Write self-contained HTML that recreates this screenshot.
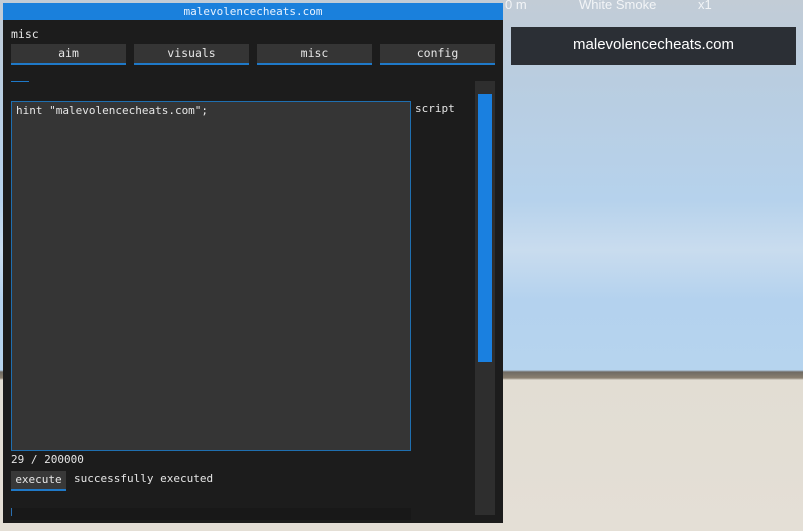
<!DOCTYPE html>
<html><head><meta charset="utf-8"><style>
*{margin:0;padding:0;box-sizing:border-box}
body{width:803px;height:531px;overflow:hidden;position:relative;font-family:"DejaVu Sans Mono","Liberation Mono",monospace;font-size:11px;color:#e6e6e6;
background:linear-gradient(180deg,#c2ccd6 0px,#b9cde0 80px,#b6d2ec 200px,#c9dcee 250px,#b4d2ee 300px,#b6d4ee 370px,#6f6a62 372px,#8a8070 378px,#e2ddd3 380px,#e4dfd6 531px)}
.a{position:absolute}
.win{left:3px;top:3px;width:500px;height:520px;background:#1c1c1c}
.title{left:3px;top:3px;width:500px;height:17px;background:#1a80dc;color:#e8f2ff;text-align:center;line-height:17px;font-size:11px}
.tab{top:44px;width:115px;height:21px;background:#353535;border-bottom:2px solid #1f79c8;text-align:center;line-height:18px;font-size:11.5px}
</style></head><body>
<div class="a" style="left:505px;top:0;width:298px;height:14px;color:#fff;font-family:'Liberation Sans',sans-serif;font-size:13px;opacity:.8"><span class="a" style="left:0;top:-3px">0 m</span><span class="a" style="left:74px;top:-3px">White Smoke</span><span class="a" style="left:193px;top:-3px">x1</span></div>
<div class="a" style="left:511px;top:27px;width:285px;height:38px;background:#2b2f35;color:#fff;font-family:'Liberation Sans',sans-serif;font-size:15px;text-align:center;line-height:36px">malevolencecheats.com</div>
<div class="a win"></div>
<div class="a title">malevolencecheats.com</div>
<div class="a" style="left:11px;top:27px;font-size:11.5px">misc</div>
<div class="a tab" style="left:11px">aim</div>
<div class="a tab" style="left:134px">visuals</div>
<div class="a tab" style="left:257px">misc</div>
<div class="a tab" style="left:380px">config</div>
<div class="a" style="left:11px;top:81px;width:18px;height:1px;background:#1f79c8"></div>
<div class="a" style="left:475px;top:81px;width:20px;height:434px;background:#2e2e2e"></div>
<div class="a" style="left:478px;top:94px;width:14px;height:268px;background:#1a80e0"></div>
<div class="a" style="left:11px;top:101px;width:400px;height:350px;background:#353535;border:1px solid #1f6fb0;padding:2px 4px;font-size:11px">hint "malevolencecheats.com";</div>
<div class="a" style="left:415px;top:102px;font-size:11px">script</div>
<div class="a" style="left:11px;top:453px;font-size:11px">29 / 200000</div>
<div class="a" style="left:11px;top:471px;width:55px;height:20px;background:#383838;border-bottom:2px solid #1f79c8;text-align:center;line-height:17px;font-size:11px">execute</div>
<div class="a" style="left:74px;top:472px;font-size:11px">successfully executed</div>
<div class="a" style="left:11px;top:508px;width:400px;height:12px;background:#181818"></div>
<div class="a" style="left:11px;top:508px;width:1px;height:8px;background:#2a6fb0"></div>
</body></html>
